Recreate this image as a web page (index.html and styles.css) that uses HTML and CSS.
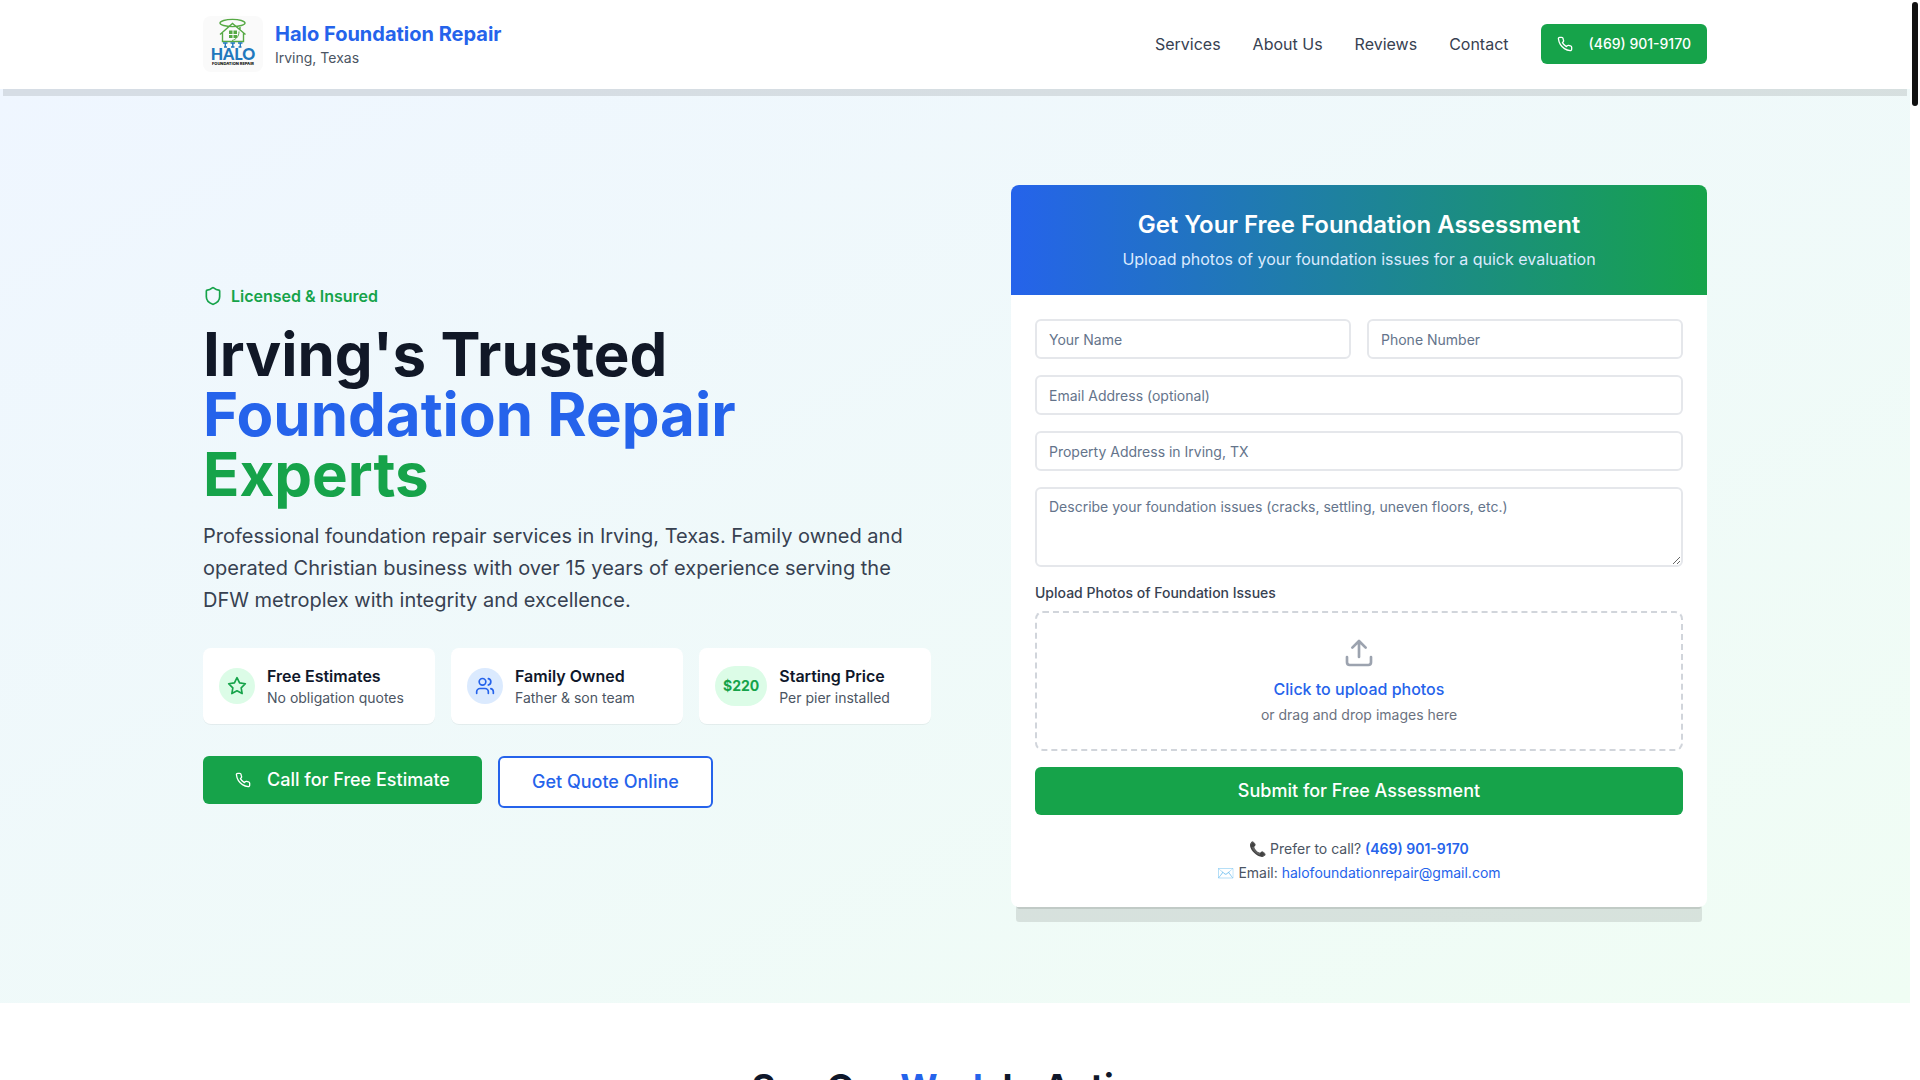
FILE: index.html
```html
<!DOCTYPE html>
<html lang="en">
<head>
  <meta charset="UTF-8">
  <meta name="viewport" content="width=device-width, initial-scale=1.0">
  <title>Halo Foundation Repair | Irving, Texas</title>
  <link rel="stylesheet" href="styles.css">
</head>
<body>
  <header class="site-header">
    <div class="container header-inner">
      <div class="brand">
        <svg class="logo" viewBox="0 0 60 56" role="img" aria-label="Halo Foundation Repair logo">
          <g fill="none" stroke="#56a944" stroke-width="1.4">
            <ellipse cx="29.500" cy="7" rx="12.500" ry="3.600"/>
            <path d="M17 18.500 29.500 7.500 42.500 18.500M19.500 17V25.500H40.500V17M37 11v3"/>
            <path d="M36 15.500c0 5-3 8-7 9" stroke-width="1"/>
          </g>
          <path d="M26 14.500h3.500V18H26zM30.500 14.500H34V18h-3.500zM26 19h3.500v3H26zM30.500 19H34v3h-3.500z" fill="#56a944"/>
          <path d="M20 27h4.500M21 31h3M27.500 27H32M28 31h3.500M35 27h4.500M35.500 31h3M22.300 27v4M29.800 27v4M37.300 27v4" stroke="#2178bd" stroke-width="1.4"/>
          <text class="logo-name" x="30" y="44" text-anchor="middle">HALO</text>
          <text class="logo-sub" x="30" y="49" text-anchor="middle">FOUNDATION REPAIR</text>
        </svg>
        <div>
          <div class="brand-name">Halo Foundation Repair</div>
          <div class="brand-place">Irving, Texas</div>
        </div>
      </div>
      <nav class="nav">
        <a href="#services">Services</a>
        <a href="#about">About Us</a>
        <a href="#reviews">Reviews</a>
        <a href="#contact">Contact</a>
        <a class="btn btn-small" href="tel:4699019170">
          <svg class="icon" viewBox="0 0 24 24"><path d="M22 16.920v3a2 2 0 0 1-2.180 2 19.790 19.790 0 0 1-8.630-3.070 19.500 19.500 0 0 1-6-6 19.790 19.790 0 0 1-3.070-8.670A2 2 0 0 1 4.110 2h3a2 2 0 0 1 2 1.720 12.840 12.840 0 0 0 .7 2.810 2 2 0 0 1-.45 2.110L8.090 9.910a16 16 0 0 0 6 6l1.270-1.270a2 2 0 0 1 2.110-.45 12.840 12.840 0 0 0 2.810.7A2 2 0 0 1 22 16.920z"/></svg>
          (469) 901-9170
        </a>
      </nav>
    </div>
  </header>

  <main>
    <section class="hero">
      <div class="container hero-grid">
        <div class="intro">
          <div class="badge">
            <svg class="icon icon-md" viewBox="0 0 24 24"><path d="M20 13c0 5-3.500 7.500-7.660 8.950a1 1 0 0 1-.67-.01C7.500 20.500 4 18 4 13V6a1 1 0 0 1 1-1c2 0 4.500-1.200 6.240-2.720a1.170 1.170 0 0 1 1.520 0C14.510 3.810 17 5 19 5a1 1 0 0 1 1 1z"/></svg>
            Licensed &amp; Insured
          </div>
          <h1>Irving's Trusted <span class="blue">Foundation Repair</span> <span class="green">Experts</span></h1>
          <p class="lead">Professional foundation repair services in Irving, Texas. Family owned and operated Christian business with over 15 years of experience serving the DFW metroplex with integrity and excellence.</p>

          <div class="features">
            <div class="feature">
              <div class="bubble bubble-green">
                <svg class="icon icon-md" viewBox="0 0 24 24"><path d="M12 2l3.090 6.260L22 9.270l-5 4.870 1.180 6.880L12 17.770l-6.180 3.250L7 14.140 2 9.270l6.910-1.010L12 2z"/></svg>
              </div>
              <div>
                <div class="feature-title">Free Estimates</div>
                <div class="feature-text">No obligation quotes</div>
              </div>
            </div>
            <div class="feature">
              <div class="bubble bubble-blue">
                <svg class="icon icon-md" viewBox="0 0 24 24"><path d="M16 21v-2a4 4 0 0 0-4-4H6a4 4 0 0 0-4 4v2"/><circle cx="9" cy="7" r="4"/><path d="M22 21v-2a4 4 0 0 0-3-3.870M16 3.130a4 4 0 0 1 0 7.750"/></svg>
              </div>
              <div>
                <div class="feature-title">Family Owned</div>
                <div class="feature-text">Father &amp; son team</div>
              </div>
            </div>
            <div class="feature">
              <div class="bubble bubble-green price">$220</div>
              <div>
                <div class="feature-title">Starting Price</div>
                <div class="feature-text">Per pier installed</div>
              </div>
            </div>
          </div>

          <div class="actions">
            <a class="btn btn-large" href="tel:4699019170">
              <svg class="icon" viewBox="0 0 24 24"><path d="M22 16.920v3a2 2 0 0 1-2.180 2 19.790 19.790 0 0 1-8.630-3.070 19.500 19.500 0 0 1-6-6 19.790 19.790 0 0 1-3.070-8.670A2 2 0 0 1 4.110 2h3a2 2 0 0 1 2 1.720 12.840 12.840 0 0 0 .7 2.810 2 2 0 0 1-.45 2.110L8.090 9.910a16 16 0 0 0 6 6l1.270-1.270a2 2 0 0 1 2.110-.45 12.840 12.840 0 0 0 2.810.7A2 2 0 0 1 22 16.920z"/></svg>
              Call for Free Estimate
            </a>
            <button class="btn btn-large btn-outline" type="button">Get Quote Online</button>
          </div>
        </div>

        <div class="form-column">
          <div class="card">
            <div class="card-header">
              <h2>Get Your Free Foundation Assessment</h2>
              <p>Upload photos of your foundation issues for a quick evaluation</p>
            </div>
            <div class="card-body">
              <form class="form">
                <div class="form-row">
                  <input type="text" placeholder="Your Name" aria-label="Your Name">
                  <input type="tel" placeholder="Phone Number" aria-label="Phone Number">
                </div>
                <input type="email" placeholder="Email Address (optional)" aria-label="Email Address">
                <input type="text" placeholder="Property Address in Irving, TX" aria-label="Property Address">
                <textarea placeholder="Describe your foundation issues (cracks, settling, uneven floors, etc.)" aria-label="Foundation issues"></textarea>
                <div>
                  <label class="upload-label" for="photos">Upload Photos of Foundation Issues</label>
                  <label class="dropzone" for="photos">
                    <svg class="icon icon-lg" viewBox="0 0 24 24"><path d="M21 15v4a2 2 0 0 1-2 2H5a2 2 0 0 1-2-2v-4M17 8l-5-5-5 5M12 3v12"/></svg>
                    <span class="dropzone-title">Click to upload photos</span>
                    <span class="dropzone-text">or drag and drop images here</span>
                  </label>
                  <input class="file-input" type="file" id="photos" accept="image/*" multiple hidden>
                </div>
                <button class="btn btn-large" type="submit">Submit for Free Assessment</button>
              </form>
              <div class="contact">
                <p>📞 Prefer to call? <a class="strong" href="tel:4699019170">(469) 901-9170</a></p>
                <p>✉️ Email: <a href="mailto:halofoundationrepair@gmail.com">halofoundationrepair@gmail.com</a></p>
              </div>
            </div>
          </div>
        </div>
      </div>
    </section>

    <section class="work">
      <h2>See Our <span class="blue">Work</span> In Action</h2>
    </section>
  </main>

  <div class="scroll-thumb"></div>
</body>
</html>
```

FILE: styles.css
```css
* {
  box-sizing: border-box;
  margin: 0;
}
body {
  height: 100vh;
  overflow: hidden;
  padding-right: 10px;
  font-family: Inter, sans-serif;
  font-size: 16px;
  line-height: 24px;
  color: #0f172a;
  background: #fff;
}
a {
  color: inherit;
  text-decoration: none;
}
.container {
  max-width: 1536px;
  margin: 0 auto;
  padding: 0 16px;
}
.blue {
  color: #2563eb;
}
.green {
  color: #16a34a;
}
.icon {
  width: 16px;
  height: 16px;
  flex-shrink: 0;
  fill: none;
  stroke: currentColor;
  stroke-width: 2;
  stroke-linecap: round;
  stroke-linejoin: round;
}
.icon-md {
  width: 20px;
  height: 20px;
}
.icon-lg {
  width: 32px;
  height: 32px;
}

/* Header */
.site-header {
  position: relative;
  z-index: 10;
  border-bottom: 1px solid #fff;
  background: #fff;
  box-shadow: 0 10px 0 -3px rgba(0, 0, 0, 0.1);
}
.header-inner {
  display: flex;
  align-items: center;
  justify-content: space-between;
  padding-top: 16px;
  padding-bottom: 16px;
}
.brand {
  display: flex;
  align-items: center;
  gap: 12px;
}
.logo {
  width: 60px;
  height: 56px;
  border-radius: 8px;
  background: #fafafa;
}
.logo-name {
  font-family: Lato, sans-serif;
  font-size: 16px;
  font-weight: 900;
  fill: #2178bd;
}
.logo-sub {
  font-size: 4px;
  font-weight: 800;
  fill: #111;
}
.brand-name {
  font-size: 20px;
  line-height: 28px;
  font-weight: 700;
  color: #2563eb;
}
.brand-place {
  font-size: 14px;
  line-height: 20px;
  color: #4b5563;
}
.nav {
  display: flex;
  align-items: center;
  gap: 32px;
  color: #374151;
}

/* Buttons */
.btn {
  display: inline-flex;
  align-items: center;
  justify-content: center;
  gap: 16px;
  border: none;
  border-radius: 6px;
  background: #16a34a;
  color: #fff;
  font-family: inherit;
  font-weight: 500;
  cursor: pointer;
}
.btn-small {
  padding: 10px 16px;
  font-size: 14px;
  line-height: 20px;
}
.btn-large {
  padding: 10px 32px;
  font-size: 18px;
  line-height: 28px;
}
.btn-outline {
  border: 2px solid #2563eb;
  background: #fff;
  color: #2563eb;
}

/* Hero */
.hero {
  padding: 96px 0;
  background: linear-gradient(to bottom right, #eff6ff, #f0fdf4);
}
.hero-grid {
  display: grid;
  grid-template-columns: 1fr 1fr;
  gap: 48px;
  align-items: center;
}
.badge {
  display: flex;
  align-items: center;
  gap: 8px;
  margin-bottom: 16px;
  font-weight: 600;
  color: #16a34a;
}
h1 {
  margin-bottom: 16px;
  font-size: 60px;
  line-height: 60px;
  font-weight: 700;
  color: #111827;
}
h1 span {
  display: block;
}
.lead {
  margin-bottom: 32px;
  font-size: 20px;
  line-height: 32px;
  color: #374151;
}
.features {
  display: grid;
  grid-template-columns: repeat(3, 1fr);
  gap: 16px;
  margin-bottom: 32px;
}
.feature {
  display: flex;
  align-items: center;
  gap: 12px;
  padding: 16px;
  border-radius: 8px;
  background: #fff;
  box-shadow: 0 1px 0 rgba(0, 0, 0, 0.05);
}
.bubble {
  padding: 8px;
  border-radius: 999px;
}
.bubble .icon {
  display: block;
}
.bubble-green {
  background: #dcfce7;
  color: #16a34a;
}
.bubble-blue {
  background: #dbeafe;
  color: #2563eb;
}
.price {
  font-size: 14px;
  font-weight: 700;
}
.feature-title {
  font-weight: 600;
}
.feature-text {
  font-size: 14px;
  line-height: 20px;
  color: #4b5563;
}
.actions {
  display: flex;
  align-items: flex-start;
  gap: 16px;
}

/* Assessment form */
.form-column {
  padding-left: 32px;
}
.card {
  border-radius: 8px;
  background: #fff;
  box-shadow: 0 20px 0 -5px rgba(0, 0, 0, 0.1), 0 8px 0 -6px rgba(0, 0, 0, 0.1);
}
.card-header {
  padding: 24px;
  border-radius: 8px 8px 0 0;
  background: linear-gradient(to right, #2563eb, #16a34a);
  color: #fff;
  text-align: center;
}
.card-header h2 {
  margin-bottom: 6px;
  font-size: 24px;
  line-height: 32px;
  font-weight: 600;
}
.card-header p {
  color: #dbeafe;
}
.card-body {
  padding: 24px;
}
.form {
  display: flex;
  flex-direction: column;
  gap: 16px;
}
.form-row {
  display: grid;
  grid-template-columns: 1fr 1fr;
  gap: 16px;
}
.form input,
.form textarea {
  width: 100%;
  padding: 8px 12px;
  border: 2px solid #e5e7eb;
  border-radius: 6px;
  background: #fff;
  font-family: inherit;
  font-size: 14px;
  line-height: 20px;
}
.form input {
  height: 40px;
}
.form textarea {
  display: block;
  height: 80px;
  resize: vertical;
}
.form input::placeholder,
.form textarea::placeholder {
  color: #64748b;
}
.upload-label {
  display: block;
  margin-bottom: 8px;
  font-size: 14px;
  line-height: 20px;
  font-weight: 500;
  color: #374151;
}
.dropzone {
  display: flex;
  flex-direction: column;
  align-items: center;
  padding: 24px;
  border: 2px dashed #d1d5db;
  border-radius: 8px;
  cursor: pointer;
}
.dropzone .icon {
  margin-bottom: 8px;
  color: #9ca3af;
}
.dropzone-title {
  margin-bottom: 4px;
  font-weight: 500;
  color: #2563eb;
}
.dropzone-text {
  font-size: 14px;
  line-height: 20px;
  color: #6b7280;
}
.contact {
  display: flex;
  flex-direction: column;
  gap: 4px;
  margin-top: 24px;
  text-align: center;
  font-size: 14px;
  line-height: 20px;
  color: #4b5563;
}
.contact a {
  color: #2563eb;
}
.contact .strong {
  font-weight: 600;
}

/* Work */
.work {
  padding: 64px 16px;
  text-align: center;
}
.work h2 {
  font-size: 36px;
  line-height: 40px;
  font-weight: 700;
}

.scroll-thumb {
  position: fixed;
  top: 2px;
  right: 2px;
  width: 6px;
  height: 104px;
  border-radius: 3px;
  background: #111;
}
```
